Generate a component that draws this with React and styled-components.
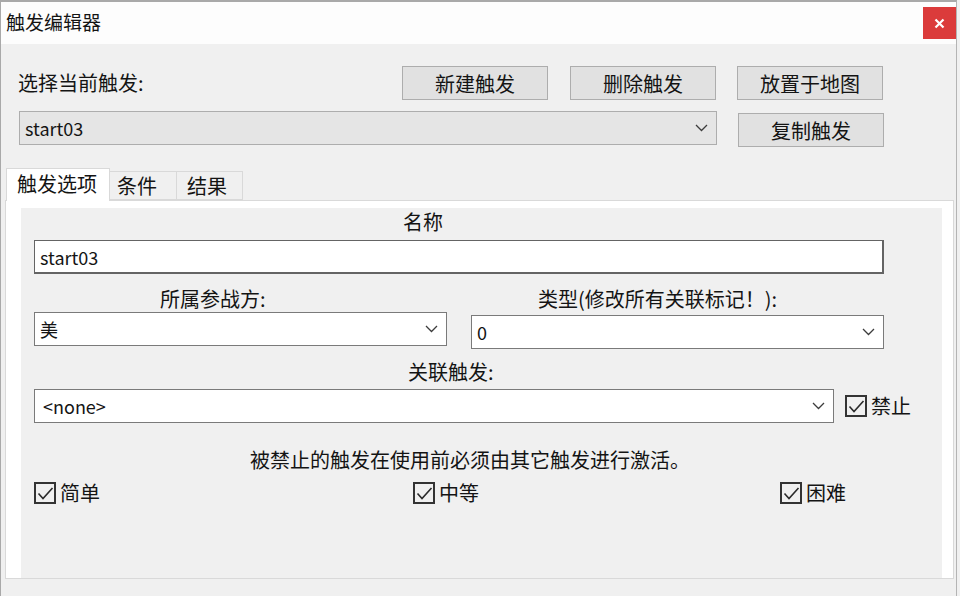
import React from 'react';
import styled, { createGlobalStyle } from 'styled-components';

const GlobalStyle = createGlobalStyle`
  html, body {
    margin: 0;
    padding: 0;
    background: #f0f0f0;
  }
  body {
    font-family: "Noto Sans CJK SC", "Noto Sans", sans-serif;
    color: #141414;
  }
  * { box-sizing: border-box; }
`;

const Window = styled.div`
  width: 957px;
  height: 596px;
  background: #f0f0f0;
  border-top: 2px solid #a9a9a9;
  border-left: 1px solid #a9a9a9;
  border-right: 1px solid #b4b4b4;
  display: flex;
  flex-direction: column;
  overflow: hidden;
`;

const TitleBar = styled.div`
  height: 42px;
  background: #fdfdfd;
  display: flex;
  align-items: flex-start;
  justify-content: space-between;
  padding-left: 5px;
`;

const Title = styled.div`
  font-size: 19px;
  line-height: 40px;
`;

const CloseButton = styled.div`
  width: 33px;
  height: 32px;
  margin-top: 5px;
  background: #db3b3b;
  display: flex;
  align-items: center;
  justify-content: center;
`;

const Row = styled.div`
  display: flex;
  align-items: ${p => p.$align || 'center'};
  padding-left: ${p => p.$left || 0}px;
  margin-top: ${p => p.$top || 0}px;
`;

const Label = styled.div`
  flex: 1;
  font-size: 20px;
  line-height: 26px;
`;

const Button = styled.div`
  width: 146px;
  height: 34px;
  flex-shrink: 0;
  margin-left: ${p => p.$gap || 0}px;
  margin-top: ${p => p.$top || 0}px;
  background: #e1e1e1;
  border: 1px solid #adadad;
  font-size: 20px;
  display: flex;
  align-items: center;
  justify-content: center;
`;

const Combo = styled.div`
  width: ${p => p.$width}px;
  height: 34px;
  flex-shrink: 0;
  margin-top: ${p => p.$top || 0}px;
  background: ${p => (p.$gray ? '#e5e5e5' : '#ffffff')};
  border: 1px solid ${p => (p.$gray ? '#adadad' : '#7a7a7a')};
  display: flex;
  align-items: center;
  justify-content: space-between;
  padding: 0 8px 0 ${p => p.$pad || 5}px;
  font-size: 18px;
`;

const TextInput = styled.div`
  width: ${p => p.$width}px;
  height: 34px;
  margin-top: 5px;
  background: #fff;
  border: 1px solid #646464;
  border-width: 1px 2px 2px 1px;
  display: flex;
  align-items: center;
  padding-left: 5px;
  font-size: 18px;
`;

const TabStrip = styled.div`
  display: flex;
  align-items: flex-end;
  padding-left: 5px;
  margin-top: 21px;
  height: 32px;
  position: relative;
  z-index: 1;
`;

const Tab = styled.div`
  width: ${p => p.$width}px;
  height: ${p => (p.$active ? 33 : 29)}px;
  margin-bottom: ${p => (p.$active ? -1 : 0)}px;
  background: ${p => (p.$active ? '#ffffff' : '#f0f0f0')};
  border: 1px solid #d9d9d9;
  border-bottom: ${p => (p.$active ? 'none' : '1px solid #d9d9d9')};
  border-left: ${p => (p.$first ? '1px solid #d9d9d9' : 'none')};
  font-size: 20px;
  line-height: ${p => (p.$active ? 30 : 28)}px;
  padding-left: ${p => p.$pad}px;
`;

const TabPanel = styled.div`
  margin-left: 4px;
  width: 949px;
  height: 379px;
  background: #ffffff;
  border: 1px solid #d9d9d9;
  padding: 7px 11px 0 15px;
`;

const Inner = styled.div`
  background: #f0f0f0;
  height: 100%;
  padding: 1px 0 0 13px;
`;

const Caption = styled.div`
  font-size: 20px;
  line-height: 26px;
  height: 26px;
  padding-left: ${p => p.$indent}px;
  margin-top: ${p => p.$top || 0}px;
`;

const TwoCols = styled.div`
  display: grid;
  grid-template-columns: 412px 412px;
  column-gap: 25px;
  margin-top: 12px;
`;

const Col = styled.div`
  display: flex;
  flex-direction: column;
`;

const CheckRow = styled.div`
  display: grid;
  grid-template-columns: 379px 367px auto;
  margin-top: 7px;
`;

const CheckItem = styled.div`
  display: flex;
  align-items: center;
  gap: 4px;
  margin-left: ${p => p.$left || 0}px;
  font-size: 20px;
  line-height: 26px;
`;

const Box = styled.div`
  width: 22px;
  height: 22px;
  flex-shrink: 0;
  border: 2px solid #333;
  display: flex;
  align-items: center;
  justify-content: center;
`;

const Chevron = () => (
  <svg width="13" height="8" viewBox="0 0 13 8">
    <path d="M1 1 L6.5 6.5 L12 1" fill="none" stroke="#3c3c3c" strokeWidth="1.3" />
  </svg>
);

const Check = ({ label, left }) => (
  <CheckItem $left={left}>
    <Box>
      <svg width="17" height="15" viewBox="0 0 17 15">
        <path d="M1.5 7.5 L6 12.5 L15.5 2" fill="none" stroke="#2a2a2a" strokeWidth="1.6" />
      </svg>
    </Box>
    {label}
  </CheckItem>
);

function App() {
  return (
    <>
      <GlobalStyle />
      <Window>
        <TitleBar>
          <Title>触发编辑器</Title>
          <CloseButton>
            <svg width="11" height="11" viewBox="0 0 11 11">
              <path d="M1.5 1.5 L9.5 9.5 M9.5 1.5 L1.5 9.5" stroke="#fff" strokeWidth="2.2" />
            </svg>
          </CloseButton>
        </TitleBar>

        <Row $left={17} $top={22}>
          <Label>选择当前触发:</Label>
          <Button>新建触发</Button>
          <Button $gap={22}>删除触发</Button>
          <Button $gap={21}>放置于地图</Button>
          <div style={{ width: 73 }} />
        </Row>
        <Row $left={18} $top={11} $align="flex-start">
          <Combo $width={698} $gray>
            <span>start03</span>
            <Chevron />
          </Combo>
          <Button $gap={21} $top={2}>复制触发</Button>
        </Row>

        <TabStrip>
          <Tab $active $first $width={104} $pad={10}>触发选项</Tab>
          <Tab $width={67} $pad={7}>条件</Tab>
          <Tab $width={66} $pad={10}>结果</Tab>
        </TabStrip>
        <TabPanel>
          <Inner>
            <Caption $indent={369}>名称</Caption>
            <TextInput $width={850}>start03</TextInput>
            <TwoCols>
              <Col>
                <Caption $indent={126}>所属参战方:</Caption>
                <Combo $width={413}>
                  <span>美</span>
                  <Chevron />
                </Combo>
              </Col>
              <Col>
                <Caption $indent={67}>类型(修改所有关联标记！):</Caption>
                <Combo $width={413} $top={3}>
                  <span>0</span>
                  <Chevron />
                </Combo>
              </Col>
            </TwoCols>
            <Caption $indent={374} $top={10}>关联触发:</Caption>
            <Row $top={4}>
              <Combo $width={800} $pad={8}>
                <span>&lt;none&gt;</span>
                <Chevron />
              </Combo>
              <Check label="禁止" left={11} />
            </Row>
            <Caption $indent={216} $top={24}>被禁止的触发在使用前必须由其它触发进行激活。</Caption>
            <CheckRow>
              <Check label="简单" />
              <Check label="中等" />
              <Check label="困难" />
            </CheckRow>
          </Inner>
        </TabPanel>
      </Window>
    </>
  );
}

export default App;
